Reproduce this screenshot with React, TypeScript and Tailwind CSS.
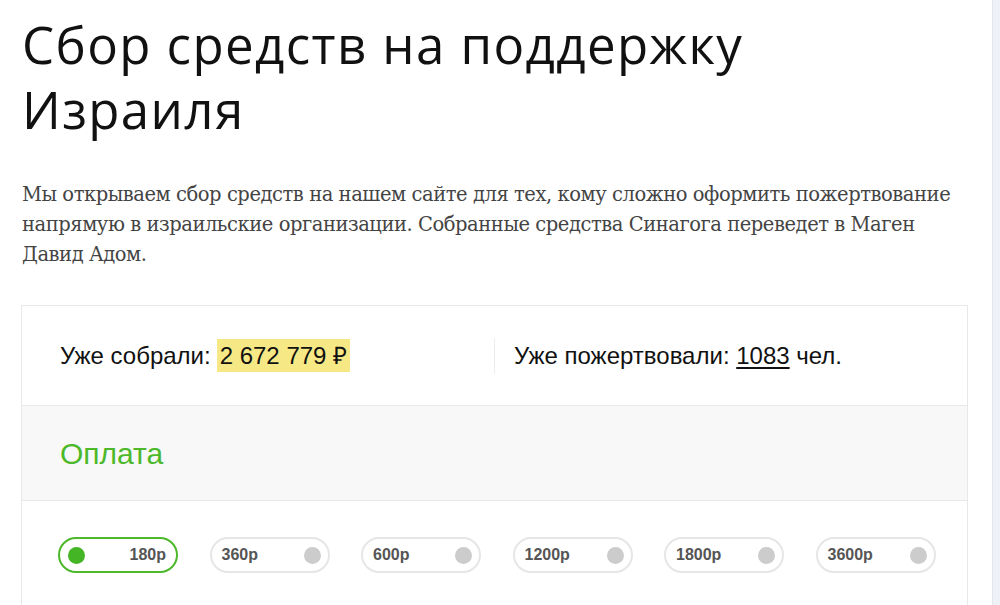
import React from "react";

const amounts = ["180р", "360р", "600р", "1200р", "1800р", "3600р"];

export default function App() {
  return (
    <div className="flex min-h-[605px] w-[1000px] bg-white overflow-hidden">
      <div className="w-[992px] shrink-0 pl-[22px] pr-[24px]">
        <h1
          className="mt-[12px] text-[51px] leading-[65px] tracking-[1.4px] text-[#111] font-normal"
          style={{ fontFamily: '"Open Sans", "Noto Sans", sans-serif' }}
        >
          Сбор средств на поддержку
          <br />
          Израиля
        </h1>
        <p
          className="mt-[38px] text-[19.5px] leading-[30px] tracking-[-0.45px] text-[#444]"
          style={{ fontFamily: '"DejaVu Serif", "Noto Serif", serif' }}
        >
          Мы открываем сбор средств на нашем сайте для тех, кому сложно оформить пожертвование напрямую в израильские организации. Собранные средства Синагога переведет в Маген Давид Адом.
        </p>
        <div
          className="mt-[35px] w-[947px] -ml-[1px] border border-[#e8e8e8]"
          style={{ fontFamily: '"Liberation Sans", Arial, sans-serif' }}
        >
          <div className="flex h-[99px] items-center text-[24px] text-[#111]">
            <div className="flex w-[472px] items-center pl-[38px]">
              <span>Уже собрали:</span>
              <span className="ml-[6px] bg-[#f6e985] px-[3px] leading-[33px]">2 672 779 ₽</span>
            </div>
            <div className="flex h-[36px] items-center border-l border-[#ececec] pl-[19px]">
              <span>
                Уже пожертвовали: <span className="underline underline-offset-[3px]">1083</span> чел.
              </span>
            </div>
          </div>
          <div className="flex h-[96px] items-center border-y border-[#e8e8e8] bg-[#f8f8f8] pl-[38px]">
            <span className="text-[30px] text-[#4cb82a]">Оплата</span>
          </div>
          <div className="flex gap-[31.5px] pl-[36px] pt-[36px] pb-[40px]">
            {amounts.map((a, i) => {
              const sel = i === 0;
              return (
                <div
                  key={a}
                  className={
                    sel
                      ? "flex h-[36px] w-[120px] items-center justify-between rounded-full border-2 border-[#4cb82a] pl-[8px] pr-[10px]"
                      : "flex h-[36px] w-[120px] items-center justify-between rounded-full border-2 border-[#e6e6e6] pl-[10px] pr-[7px]"
                  }
                >
                  {sel ? (
                    <>
                      <span className="h-[17px] w-[17px] rounded-full bg-[#44b525]" />
                      <span className="text-[16px] font-bold text-[#555]">{a}</span>
                    </>
                  ) : (
                    <>
                      <span className="text-[16px] font-bold text-[#555]">{a}</span>
                      <span className="h-[17px] w-[17px] rounded-full bg-[#cccccc]" />
                    </>
                  )}
                </div>
              );
            })}
          </div>
        </div>
      </div>
      <div className="w-[8px] shrink-0 border-l border-[#e2e7ef] bg-[#eef1f6]" />
    </div>
  );
}
